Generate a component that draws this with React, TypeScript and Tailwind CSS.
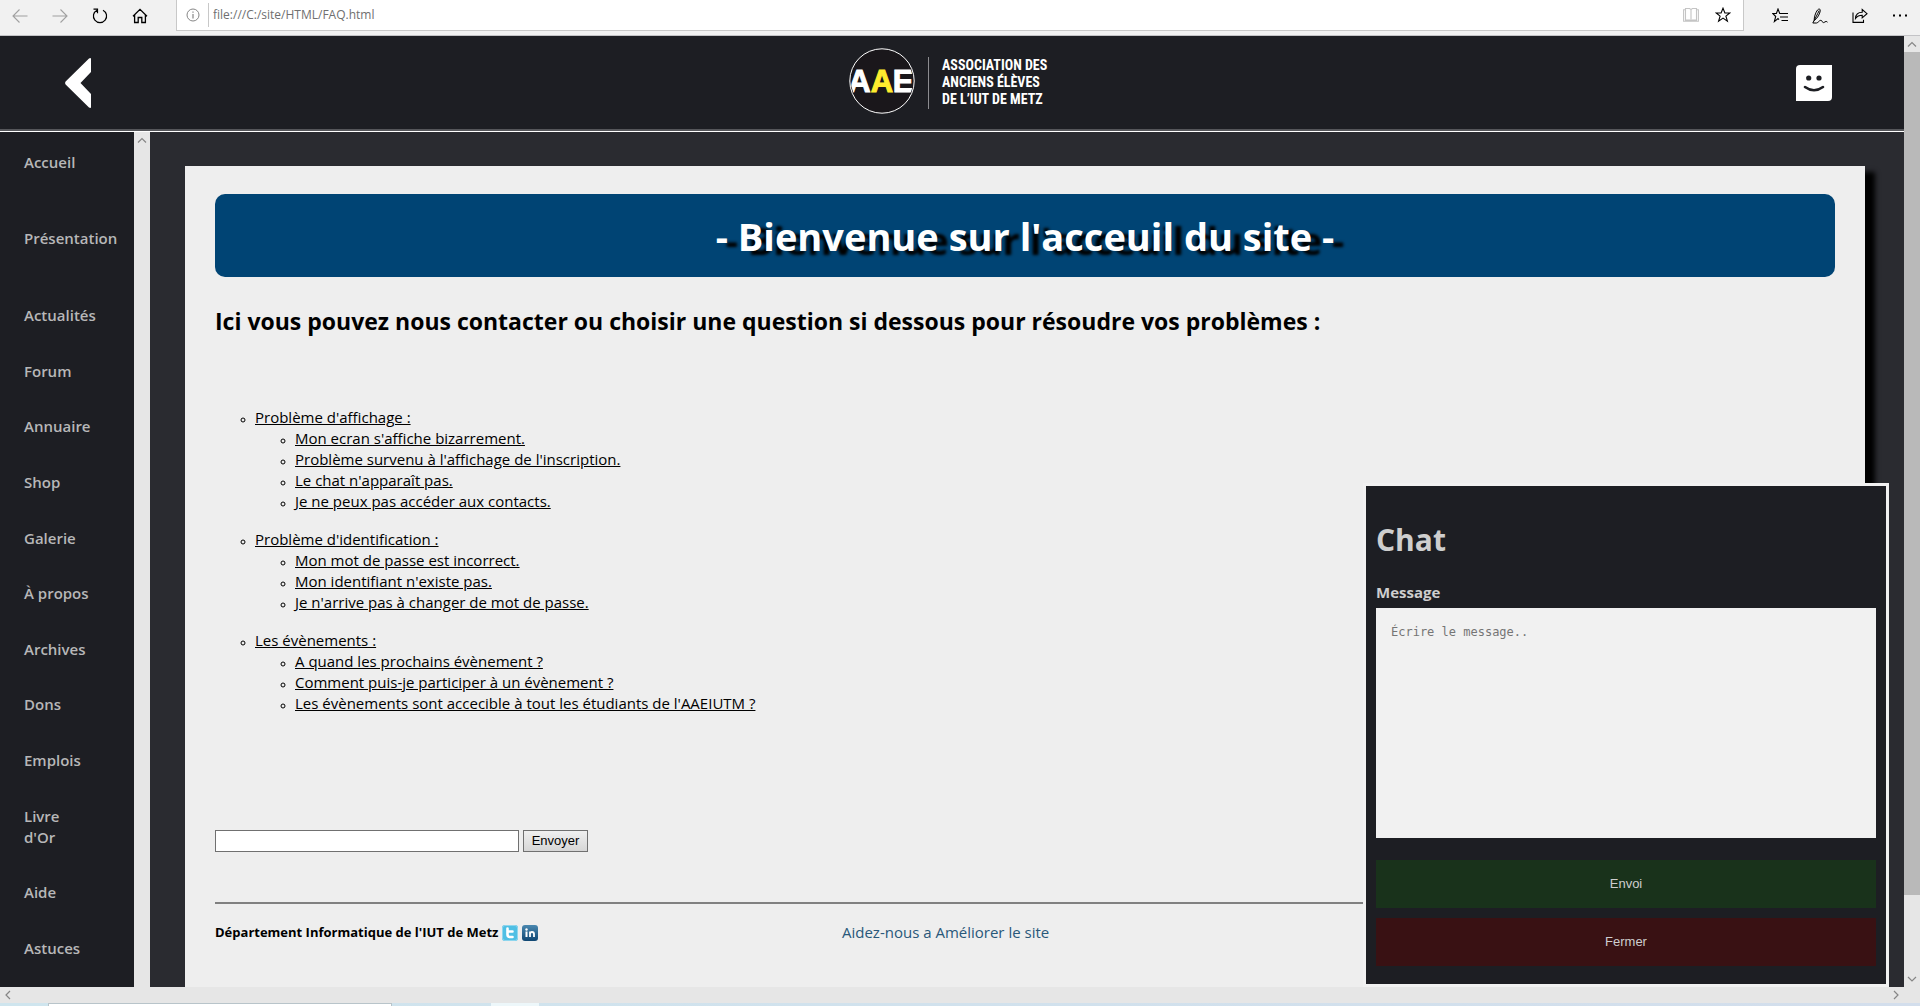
import React from "react";

const primaryLinks = ["Accueil", "Présentation"];
const sideLinks = ["Actualités", "Forum", "Annuaire", "Shop", "Galerie", "À propos", "Archives", "Dons", "Emplois", "Livre d'Or", "Aide", "Astuces"];

const faq = [
  {
    title: "Problème d'affichage :",
    items: [
      "Mon ecran s'affiche bizarrement.",
      "Problème survenu à l'affichage de l'inscription.",
      "Le chat n'apparaît pas.",
      "Je ne peux pas accéder aux contacts.",
    ],
  },
  {
    title: "Problème d'identification :",
    items: ["Mon mot de passe est incorrect.", "Mon identifiant n'existe pas.", "Je n'arrive pas à changer de mot de passe."],
  },
  {
    title: "Les évènements :",
    items: [
      "A quand les prochains évènement ?",
      "Comment puis-je participer à un évènement ?",
      "Les évènements sont accecible à tout les étudiants de l'AAEIUTM ?",
    ],
  },
];

function Icon({ children, label, className = "text-black" }: { children: React.ReactNode; label: string; className?: string }) {
  return (
    <button type="button" aria-label={label} className={`flex size-5 shrink-0 items-center justify-center ${className}`}>
      <svg viewBox="0 0 16 16" className="size-4" fill="none" stroke="currentColor" strokeWidth="1.1">
        {children}
      </svg>
    </button>
  );
}

function Chevron({ d }: { d: string }) {
  return (
    <svg viewBox="0 0 16 16" className="size-4 shrink-0" fill="none" stroke="#868686" strokeWidth="1.2" aria-hidden="true">
      <path d={d} />
    </svg>
  );
}

const star = "M8 1.2 9.9 6h4.9l-3.9 3.1 1.5 5L8 11.1l-4.4 3 1.5-5L1.2 6h4.9z";

function BrowserBar() {
  return (
    <div className="flex h-9 shrink-0 border-b border-[#c3c3c6] bg-[#f1f1f1]">
      <div className="flex h-[31px] w-44 items-center gap-5 pl-[10px]">
        <Icon label="Précédent" className="text-[#a0a0a0]">
          <path d="M15.500 8H1M7.500 1.500 1 8l6.500 6.500" />
        </Icon>
        <Icon label="Suivant" className="text-[#a0a0a0]">
          <path d="M.5 8H15M8.500 1.500 15 8l-6.500 6.500" />
        </Icon>
        <Icon label="Actualiser">
          <path d="M5 2.200A6.600 6.600 0 1 0 11 2.200M1.500 1.200h4v4" strokeWidth="1.200" />
        </Icon>
        <Icon label="Accueil du navigateur">
          <path d="M1 8.200 8 1.400l7 6.800M2.600 7v7.500h3.600V9.500h3.600v5h3.600V7" strokeWidth="1.300" />
        </Icon>
      </div>
      <div className="flex h-[31px] flex-1 items-center border border-t-0 border-[#c8c8c8] bg-white pr-[10px] pl-[9px]">
        <svg viewBox="0 0 14 14" className="size-[14px] shrink-0" fill="none" stroke="#868686" aria-hidden="true">
          <circle cx="7" cy="7" r="6" />
          <path d="M7 6v4.500M7 3.500v1.300" strokeWidth="1.200" />
        </svg>
        <span className="ml-2 h-6 w-px bg-[#c8c8c8]" />
        <input
          aria-label="Adresse"
          defaultValue="file:///C:/site/HTML/FAQ.html"
          className="ml-1 min-w-0 flex-1 bg-transparent font-['Open_Sans',sans-serif] text-xs text-[#6f6f6f] outline-none"
        />
        <div className="flex gap-3">
          <Icon label="Mode lecture" className="text-[#c4c4c4]">
            <path d="M2.500 1.500h4.200L8 2.600l1.300-1.100h4.200v11.600H9.300L8 14.200l-1.300-1.100H2.500zM8 2.600v11.600M2.500 2.700H.6v11.600h14.800V2.700h-1.900" />
          </Icon>
          <Icon label="Ajouter aux favoris">
            <path d={star} />
          </Icon>
        </div>
      </div>
      <div className="flex h-[31px] w-44 items-center gap-5 pl-[26px]">
        <Icon label="Favoris">
          <path d="M9.500 5.500H7.700L6 1 4.400 5.500H.7l3 3L2.400 13.600 6 10.600l1 1M9.500 5.500H16M8 9h8M9.500 12.500H16" />
        </Icon>
        <Icon label="Annoter">
          <path
            d="M2.200 12.500C2 9.500 3.500 4.500 5.500 2c1-1.300 3-1.300 2.800.5C8 5.500 5.500 10.500 2.200 12.500zM7.200 2.500C5.500 6 3.500 10 .8 15M.8 15h3.700c2-.3 2.600-2.700 4.300-2.700 1.600 0 1.200 2.300 2.700 2.300 1.300 0 1.600-1.200 2.500-1.200.7 0 1 .4 1.500.8"
            strokeWidth="1"
          />
        </Icon>
        <Icon label="Partager">
          <path d="M1 4.500v9.900h10.500v-2.600M3.500 10.500c.2-4 3-6.200 6.700-6.200V1.500L15 5.700l-4.800 4.200V7.300c-3 0-5 .8-6.700 3.200z" />
        </Icon>
        <Icon label="Plus">
          <path d="M1 7.500h2M7 7.500h2M13 7.500h2" strokeWidth="1.900" />
        </Icon>
      </div>
    </div>
  );
}

function Logo() {
  return (
    <a href="#accueil" aria-label="Association des anciens élèves de l'IUT de Metz" className="mb-1 flex h-[66px] w-[206px] items-center">
      <svg viewBox="0 0 66 66" className="size-[66px] shrink-0">
        <defs>
          <clipPath id="disc">
            <circle cx="33" cy="33" r="31" />
          </clipPath>
        </defs>
        <circle cx="33" cy="33" r="32.200" fill="#1a171b" stroke="#fff" strokeWidth="1" />
        <g clipPath="url(#disc)" textAnchor="middle" strokeWidth="1" className="font-['Liberation_Sans',sans-serif] text-[31px] font-bold">
          <text x="10.500" y="44" fill="#fff" stroke="#fff">A</text>
          <text x="54" y="44" fill="#fff" stroke="#fff">E</text>
          <text x="33" y="44" fill="#ffed2e" stroke="#ffed2e">A</text>
        </g>
      </svg>
      <span className="mt-1 ml-[13px] h-[52px] w-px shrink-0 bg-[#8c8c90]" />
      <span className="mt-1 ml-[13px] whitespace-nowrap font-['Liberation_Sans_Narrow','Roboto_Condensed',sans-serif] text-sm leading-[17px] font-bold text-white">
        ASSOCIATION DES
        <br />
        ANCIENS ÉLÈVES
        <br />
        DE L’IUT DE METZ
      </span>
    </a>
  );
}

function SiteHeader() {
  return (
    <header className="grid h-24 shrink-0 grid-cols-[1fr_auto_1fr] items-center border-b border-white bg-[#1d1e23] pb-0.5 shadow-[inset_0_-2px_0_#55565a]">
      <button type="button" aria-label="Retour" className="ml-[65px] justify-self-start">
        <svg viewBox="0 0 26 50" className="h-[50px] w-[26px]" fill="#fff">
          <path d="M24 .5Q25.500-.3 26 .5V14L15.500 25 26 36v13.500q-.5.800-2 0L.6 26.500Q-.4 25 .6 23.500z" />
        </svg>
      </button>
      <Logo />
      <button type="button" aria-label="Profil" className="mr-[72px] justify-self-end">
        <svg viewBox="0 0 36 36" className="size-9">
          <path d="M4 0h32v32q0 4-4 4H0V4q0-4 4-4z" fill="#fff" />
          <circle cx="12.700" cy="13" r="2.600" fill="#1d1e23" />
          <circle cx="23" cy="13" r="2.600" fill="#1d1e23" />
          <path d="M9 22q9 6.500 18 0" fill="none" stroke="#1d1e23" strokeWidth="2.600" strokeLinecap="round" />
        </svg>
      </button>
    </header>
  );
}

function SideLink({ label }: { label: string }) {
  return (
    <li className="w-[68px]">
      <a href="#menu" className="text-[15px] leading-[21px] font-semibold text-[#b7b7b8]">
        {label}
      </a>
    </li>
  );
}

function Sidebar() {
  return (
    <nav aria-label="Menu" className="flex w-[134px] shrink-0 flex-col bg-[#1d1e23] pt-5 pb-7 pl-6">
      <ul className="flex flex-col gap-[55px] pb-14 leading-[21px]">
        {primaryLinks.map((label) => (
          <SideLink key={label} label={label} />
        ))}
      </ul>
      <ul className="flex flex-1 flex-col justify-between leading-[21px]">
        {sideLinks.map((label) => (
          <SideLink key={label} label={label} />
        ))}
      </ul>
    </nav>
  );
}

function SocialIcons() {
  return (
    <span className="flex gap-1">
      <a href="#twitter" aria-label="Twitter">
        <svg viewBox="0 0 16 16" className="size-4">
          <rect width="16" height="16" rx="3" fill="#4fbfe4" />
          <rect x=".5" y=".5" width="15" height="15" rx="2.500" fill="none" stroke="#8ed6ee" />
          <path d="M5.500 3.500v6Q5.500 12 8 12h2.500M5.500 6.500h5" fill="none" stroke="#fff" strokeWidth="2.600" strokeLinecap="round" />
        </svg>
      </a>
      <a href="#linkedin" aria-label="LinkedIn">
        <svg viewBox="0 0 16 16" className="size-4">
          <defs>
            <linearGradient id="in" x2="0" y2="1">
              <stop stopColor="#4a88b0" />
              <stop offset="1" stopColor="#0f4672" />
            </linearGradient>
          </defs>
          <rect width="16" height="16" rx="3" fill="url(#in)" />
          <rect x="3.500" y="6.500" width="2" height="5.500" fill="#fff" />
          <circle cx="4.500" cy="4.500" r="1.200" fill="#fff" />
          <path d="M8 12V6.500M8 9q0-2 2-2t2 2v3" fill="none" stroke="#fff" strokeWidth="1.800" />
        </svg>
      </a>
    </span>
  );
}

function FaqCard() {
  return (
    <section className="h-full bg-[#eee] px-[30px] pt-7 shadow-[8px_8px_5px_2px_#000]">
      <h1 className="flex h-[83px] items-center justify-center rounded-[10px] bg-[#004474] pt-px text-[38px] font-bold text-white [text-shadow:10px_4px_3px_#000]">
        - Bienvenue sur l'acceuil du site -
      </h1>
      <h2 className="mt-7 text-[23px] leading-8 font-bold">
        Ici vous pouvez nous contacter ou choisir une question si dessous pour résoudre vos problèmes :
      </h2>
      <ul className="mt-[70px] flex list-[circle] flex-col gap-[17px] pl-10 text-[15px] leading-[21px]">
        {faq.map((group) => (
          <li key={group.title} className="marker:text-[10px]">
            <a href="#faq" className="underline">{group.title}</a>
            <ul className="list-[circle] pl-10">
              {group.items.map((item) => (
                <li key={item} className="marker:text-[10px]">
                  <a href="#faq" className="underline">{item}</a>
                </li>
              ))}
            </ul>
          </li>
        ))}
      </ul>
      <form className="mt-[116px] flex gap-1 font-['Liberation_Sans',sans-serif] text-[13px]" onSubmit={(e) => e.preventDefault()}>
        <input aria-label="Votre question" className="h-[22px] w-[304px] border border-[#707070] bg-white px-1" />
        <button type="submit" className="h-[22px] w-[65px] border border-[#707070] bg-linear-to-b from-[#f0f0f0] to-[#d6d6d6]">
          Envoyer
        </button>
      </form>
      <footer className="mt-[50px] grid grid-cols-[627fr_993fr] items-center border-t-2 border-[#808080] pt-[18px]">
        <div className="flex items-center gap-1 text-[13px] leading-[21px] font-bold">
          Département Informatique de l'IUT de Metz
          <SocialIcons />
        </div>
        <a href="#aide" className="justify-self-start text-[15px] leading-[21px] text-[#29587a]">
          Aidez-nous a Améliorer le site
        </a>
      </footer>
    </section>
  );
}

function Chat() {
  return (
    <aside className="absolute right-[15px] bottom-0 w-[526px] border-[3px] border-[#f1f1f1] bg-[#1d1e23] px-[10px] pt-[33px] pb-[18px] text-[#cecece]">
      <h2 className="text-[30px] leading-[42px] font-bold">Chat</h2>
      <form onSubmit={(e) => e.preventDefault()} className="flex flex-col">
        <label htmlFor="msg" className="mt-5 mb-1 text-[15px] leading-[23px] font-bold">
          Message
        </label>
        <textarea
          id="msg"
          placeholder="Écrire le message.."
          className="mb-[22px] h-[230px] resize-none bg-[#f1f1f1] p-[15px] font-['DejaVu_Sans_Mono',monospace] text-[12px] leading-[18px] placeholder:text-[#757575]"
        />
        <button type="submit" className="mb-[10px] h-12 bg-[#19321b] font-['Liberation_Sans',sans-serif] text-[13px]">
          Envoi
        </button>
        <button type="button" className="h-12 bg-[#391113] font-['Liberation_Sans',sans-serif] text-[13px]">
          Fermer
        </button>
      </form>
    </aside>
  );
}

export default function App() {
  return (
    <div className="flex h-screen flex-col overflow-hidden bg-[#e6e6e6] font-['Open_Sans',sans-serif] text-black">
      <BrowserBar />
      <div className="flex min-h-0 flex-1">
        <div className="flex min-w-0 flex-1 flex-col">
          <SiteHeader />
          <div className="flex min-h-0 flex-1">
            <Sidebar />
            <div className="w-4 shrink-0 bg-[#e6e6e6]">
              <Chevron d="M4 10.500 8 6.500l4 4" />
            </div>
            <main className="relative min-w-0 flex-1 overflow-hidden bg-[#2a2b30] pt-[34px] pr-[39px] pl-[35px]">
              <FaqCard />
              <Chat />
            </main>
          </div>
        </div>
        <div className="flex w-4 shrink-0 flex-col">
          <Chevron d="M4 10.500 8 6.500l4 4" />
          <div className="flex-1 bg-[#b9b9b9]" />
          <div className="h-[76px] shrink-0" />
          <Chevron d="M4 6 8 10l4-4" />
        </div>
      </div>
      <div className="flex h-4 shrink-0 justify-between pr-4">
        <Chevron d="M10 4 6 8l4 4" />
        <Chevron d="M6 4l4 4-4 4" />
      </div>
      <div className="flex h-[3px] shrink-0 bg-linear-to-r from-[#cfe5ee] to-[#d3deec]">
        <div className="ml-12 w-[344px] border border-b-0 border-[#b8c4ca] bg-white" />
        <div className="ml-[99px] w-12 bg-[#edf7fa]" />
      </div>
    </div>
  );
}
